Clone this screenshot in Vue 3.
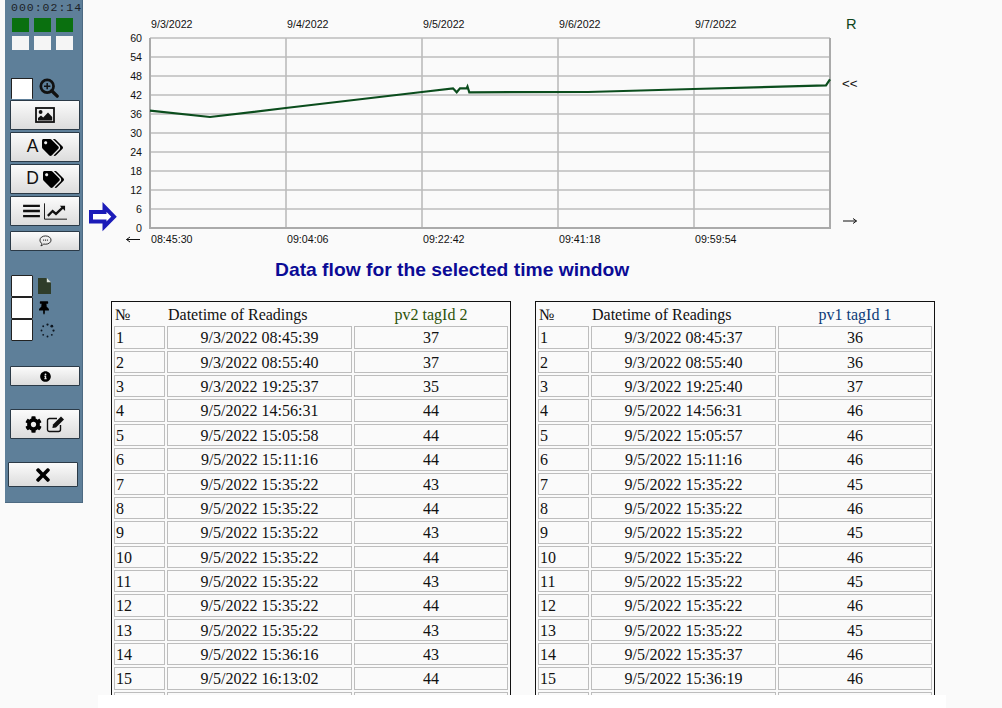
<template>
  <div class="page">
    <aside class="sidebar">
      <div class="timer">000:02:14</div>
      <div class="lights">
        <span class="light on"></span><span class="light on"></span><span class="light on"></span>
      </div>
      <div class="lights second">
        <span class="light"></span><span class="light"></span><span class="light"></span>
      </div>

      <div class="check-row zoom-row">
        <span class="check"></span>
        <svg class="ico-zoom" viewBox="0 0 22 22">
          <circle cx="9" cy="9" r="7" fill="none" stroke="#111" stroke-width="3" />
          <path d="M14 14l6 6" stroke="#111" stroke-width="3.6" stroke-linecap="round" />
          <path d="M9 5.5v7M5.5 9h7" stroke="#111" stroke-width="1.6" />
        </svg>
      </div>

      <button class="btn big first">
        <svg class="ico-image" viewBox="0 0 20 16">
          <rect x="1" y="1" width="18" height="14" fill="none" stroke="#111" stroke-width="1.8" />
          <circle cx="5.6" cy="5" r="1.9" fill="#111" />
          <path d="M3 13.500v-2.500l3-2.600 2.200 2 4.800-5 4.200 4.600v3.500z" fill="#111" />
        </svg>
      </button>
      <button class="btn big">
        <span class="btn-letter">A</span>
        <svg class="ico-tags" viewBox="0 0 640 512"><path :d="tagsPath" /></svg>
      </button>
      <button class="btn big">
        <span class="btn-letter">D</span>
        <svg class="ico-tags" viewBox="0 0 640 512"><path :d="tagsPath" /></svg>
      </button>
      <button class="btn big">
        <svg class="ico-bars" viewBox="0 0 18 15">
          <path d="M0 2h18M0 7.500h18M0 13h18" stroke="#111" stroke-width="2.600" />
        </svg>
        <svg class="ico-trend" viewBox="0 0 24 17">
          <path d="M.5 0v16.500H24" fill="none" stroke="#111" stroke-width="1" />
          <path d="M4 13l5-5 3.500 3L20 4" fill="none" stroke="#111" stroke-width="2.400" />
          <path d="M16.500 2.500H22V8z" fill="#111" />
        </svg>
      </button>
      <button class="btn small chat">
        <svg class="ico-chat" viewBox="0 0 14 13">
          <path d="M7 1c3.300 0 6 1.900 6 4.500S10.300 10 7 10c-.7 0-1.300-.1-1.900-.2C4.300 10.800 3.200 11.500 2 11.800c.6-.7 1-1.500 1.100-2.500C1.800 8.500 1 7.100 1 5.500 1 2.900 3.700 1 7 1z" fill="none" stroke="#222" stroke-width="1" />
          <path d="M4.500 5.500h1M6.500 5.500h1M8.500 5.500h1" stroke="#222" stroke-width="1.200" />
        </svg>
      </button>

      <div class="check-row docs">
        <span class="check"></span>
        <svg class="ico-file" viewBox="0 0 13 16"><path d="M0 0h8.500L13 4.500V16H0z" fill="#2f3d2a" /><path d="M8.800 0v4.300H13z" fill="#dfe6dc" /></svg>
      </div>
      <div class="check-row">
        <span class="check"></span>
        <svg class="ico-pin" viewBox="0 0 384 512"><path :d="pinPath" /></svg>
      </div>
      <div class="check-row">
        <span class="check"></span>
        <svg class="ico-spin" viewBox="0 0 16 16">
          <circle v-for="(d, i) in spinDots" :key="i" :cx="d.x" :cy="d.y" :r="d.r" fill="#0d1620" />
        </svg>
      </div>

      <button class="btn small info">
        <svg class="ico-info" viewBox="0 0 512 512"><path :d="infoPath" /></svg>
      </button>
      <button class="btn settings">
        <svg class="ico-cog" viewBox="0 0 512 512"><path :d="cogPath" /></svg>
        <svg class="ico-edit" viewBox="0 0 20 18">
          <path d="M14.500 10v4.500a2 2 0 0 1-2 2h-9a2 2 0 0 1-2-2v-9a2 2 0 0 1 2-2H11" fill="none" stroke="#111" stroke-width="1.400" />
          <path d="M7 9.500L15 1.500l3 3L10 12.500l-3.600.6z" fill="#111" />
        </svg>
      </button>
      <button class="btn close">
        <svg class="ico-close" viewBox="0 0 352 512"><path :d="timesPath" /></svg>
      </button>
    </aside>

    <main class="main">
      <svg class="chart" width="790" height="256" viewBox="83 0 790 256">
        <!-- pointer arrow -->
        <path d="M91 212h13.500v-5l9.500 9.700-9.500 9.700v-5H91z" fill="#fff" stroke="#1b1bb8" stroke-width="4" />

        <line v-for="y in hLines" :key="'h' + y" x1="150" x2="830" :y1="y" :y2="y" class="grid" />
        <line v-for="x in vLines" :key="'v' + x" :x1="x" :x2="x" y1="38" y2="228" class="grid" />
        <path d="M150 38v190h680V38" fill="none" stroke="#aaa" stroke-width="2" />

        <polyline class="series" :points="seriesPoints" />

        <text v-for="t in yTicks" :key="'y' + t.label" x="142" :y="t.y + 4" class="tick" text-anchor="end">{{ t.label }}</text>
        <text v-for="d in xTicks" :key="d.date" :x="d.x" y="28" class="tick">{{ d.date }}</text>
        <text v-for="d in xTicks" :key="d.time" :x="d.x" y="243" class="tick">{{ d.time }}</text>

        <text x="846" y="29" class="right-r">R</text>
        <text x="842" y="88" class="right-mark">&lt;&lt;</text>
        <path d="M843 221h13.500M853 218.500l3.500 2.500-3.500 2.500" fill="none" stroke="#111" stroke-width="1" />
        <path d="M140 239.500h-13.500M130 237l-3.500 2.500 3.500 2.500" fill="none" stroke="#111" stroke-width="1" />
      </svg>

      <h1 class="title">Data flow for the selected time window</h1>

      <div class="tables">
        <table v-for="t in tables" :key="t.tag" class="readings">
          <thead>
            <tr>
              <th class="col-n">№</th>
              <th class="col-d">Datetime of Readings</th>
              <th class="col-v" :style="{ color: t.color }">{{ t.tag }}</th>
            </tr>
          </thead>
          <tbody>
            <tr v-for="(r, i) in t.rows" :key="i">
              <td class="num">{{ i + 1 }}</td>
              <td>{{ r[0] }}</td>
              <td>{{ r[1] }}</td>
            </tr>
            <!-- next row is cut off by the strip, only its top edge shows -->
            <tr class="cut"><td></td><td></td><td></td></tr>
          </tbody>
        </table>
      </div>
      <div class="strip"></div>
    </main>
  </div>
</template>

<script setup>
const tagsPath = 'M497.941 225.941L286.059 14.059A48 48 0 0 0 252.118 0H48C21.49 0 0 21.49 0 48v204.118a48 48 0 0 0 14.059 33.941l211.882 211.882c18.744 18.745 49.136 18.746 67.882 0l204.118-204.118c18.745-18.745 18.745-49.137 0-67.882zM112 160c-26.51 0-48-21.49-48-48s21.49-48 48-48 48 21.49 48 48-21.49 48-48 48zm513.941 133.823L421.823 497.941c-18.745 18.745-49.137 18.745-67.882 0l-.36-.36L527.64 323.522c16.999-16.999 26.36-39.6 26.36-63.64s-9.362-46.641-26.36-63.64L331.397 0h48.721a48 48 0 0 1 33.941 14.059l211.882 211.882c18.745 18.745 18.745 49.137 0 67.882z'
const pinPath = 'M298.028 214.267L285.793 96H328c13.255 0 24-10.745 24-24V24c0-13.255-10.745-24-24-24H56C42.745 0 32 10.745 32 24v48c0 13.255 10.745 24 24 24h42.207L85.972 214.267C37.465 236.82 0 277.261 0 328c0 13.255 10.745 24 24 24h136v104.007c0 1.242.289 2.467.845 3.578l24 48c2.941 5.882 11.364 5.893 14.311 0l24-48a8.008 8.008 0 0 0 .845-3.578V352h136c13.255 0 24-10.745 24-24-.001-51.183-37.983-91.42-85.973-113.733z'
const infoPath = 'M256 8C119.043 8 8 119.083 8 256c0 136.997 111.043 248 248 248s248-111.003 248-248C504 119.083 392.957 8 256 8zm0 110c23.196 0 42 18.804 42 42s-18.804 42-42 42-42-18.804-42-42 18.804-42 42-42zm56 254c0 6.627-5.373 12-12 12h-88c-6.627 0-12-5.373-12-12v-24c0-6.627 5.373-12 12-12h12v-64h-12c-6.627 0-12-5.373-12-12v-24c0-6.627 5.373-12 12-12h64c6.627 0 12 5.373 12 12v100h12c6.627 0 12 5.373 12 12v24z'
const cogPath = 'M487.4 315.7l-42.6-24.6c4.3-23.2 4.3-47 0-70.2l42.6-24.6c4.9-2.8 7.1-8.6 5.5-14-11.1-35.6-30-67.8-54.7-94.6-3.8-4.1-10-5.1-14.8-2.3L380.8 110c-17.9-15.4-38.5-27.3-60.8-35.1V25.8c0-5.6-3.9-10.5-9.4-11.7-36.7-8.2-74.3-7.8-109.2 0-5.5 1.2-9.4 6.1-9.4 11.7V75c-22.2 7.9-42.8 19.8-60.8 35.1L88.7 85.5c-4.9-2.8-11-1.9-14.8 2.3-24.7 26.7-43.6 58.9-54.7 94.6-1.7 5.4.6 11.2 5.5 14L67.3 221c-4.3 23.2-4.3 47 0 70.2l-42.6 24.6c-4.9 2.8-7.1 8.6-5.5 14 11.1 35.6 30 67.8 54.7 94.6 3.8 4.1 10 5.1 14.8 2.3l42.6-24.6c17.9 15.4 38.5 27.3 60.8 35.1v49.2c0 5.6 3.9 10.5 9.4 11.7 36.7 8.2 74.3 7.8 109.2 0 5.5-1.2 9.4-6.1 9.4-11.7v-49.2c22.2-7.9 42.8-19.8 60.8-35.1l42.6 24.6c4.9 2.8 11 1.9 14.8-2.3 24.7-26.7 43.6-58.9 54.7-94.6 1.5-5.500-.7-11.300-5.600-14.100zM256 336c-44.100 0-80-35.900-80-80s35.900-80 80-80 80 35.900 80 80-35.900 80-80 80z'
const timesPath = 'M242.72 256l100.07-100.07c12.28-12.28 12.28-32.19 0-44.48l-22.24-22.24c-12.28-12.28-32.19-12.28-44.48 0L176 189.28 75.93 89.21c-12.28-12.28-32.19-12.28-44.48 0L9.21 111.45c-12.28 12.28-12.28 32.19 0 44.48L109.28 256 9.21 356.07c-12.28 12.28-12.28 32.19 0 44.48l22.24 22.24c12.28 12.28 32.2 12.28 44.48 0L176 322.72l100.07 100.07c12.28 12.28 32.2 12.28 44.48 0l22.24-22.24c12.28-12.28 12.28-32.19 0-44.48L242.72 256z'

const spinDots = [
  { x: 8, y: 1.6, r: 1.2 }, { x: 12.6, y: 3.4, r: 1.5 }, { x: 14.400, y: 8, r: 1.2 },
  { x: 12.6, y: 12.6, r: 1 }, { x: 8, y: 14.400, r: 1 }, { x: 3.4, y: 12.6, r: 1 },
  { x: 1.6, y: 8, r: 1 }, { x: 3.4, y: 3.4, r: 1 },
]

const hLines = [38, 57, 76, 95, 114, 133, 152, 171, 190, 209]
const vLines = [286, 422, 558, 694]
const yTicks = [60, 54, 48, 42, 36, 30, 24, 18, 12, 6, 0].map((v, i) => ({ label: v, y: 38 + i * 19 }))
const xTicks = [
  { x: 151, date: '9/3/2022', time: '08:45:30' },
  { x: 287, date: '9/4/2022', time: '09:04:06' },
  { x: 423, date: '9/5/2022', time: '09:22:42' },
  { x: 559, date: '9/6/2022', time: '09:41:18' },
  { x: 695, date: '9/7/2022', time: '09:59:54' },
]
const seriesPoints = '150,110.7 210,117 285.7,108 422,92 453,88.3 456.7,92.3 460,88.3 466.7,88.3 467.5,86.5 469.3,92.3 588,92 693.7,89 826,85.3 830,79.3'

const tables = [
  {
    tag: 'pv2 tagId 2',
    color: '#2c5208',
    rows: [
      ['9/3/2022 08:45:39', 37], ['9/3/2022 08:55:40', 37], ['9/3/2022 19:25:37', 35],
      ['9/5/2022 14:56:31', 44], ['9/5/2022 15:05:58', 44], ['9/5/2022 15:11:16', 44],
      ['9/5/2022 15:35:22', 43], ['9/5/2022 15:35:22', 44], ['9/5/2022 15:35:22', 43],
      ['9/5/2022 15:35:22', 44], ['9/5/2022 15:35:22', 43], ['9/5/2022 15:35:22', 44],
      ['9/5/2022 15:35:22', 43], ['9/5/2022 15:36:16', 43], ['9/5/2022 16:13:02', 44],
    ],
  },
  {
    tag: 'pv1 tagId 1',
    color: '#0c3a78',
    rows: [
      ['9/3/2022 08:45:37', 36], ['9/3/2022 08:55:40', 36], ['9/3/2022 19:25:40', 37],
      ['9/5/2022 14:56:31', 46], ['9/5/2022 15:05:57', 46], ['9/5/2022 15:11:16', 46],
      ['9/5/2022 15:35:22', 45], ['9/5/2022 15:35:22', 46], ['9/5/2022 15:35:22', 45],
      ['9/5/2022 15:35:22', 46], ['9/5/2022 15:35:22', 45], ['9/5/2022 15:35:22', 46],
      ['9/5/2022 15:35:22', 45], ['9/5/2022 15:35:37', 46], ['9/5/2022 15:36:19', 46],
    ],
  },
]
</script>

<style scoped>
.page {
  display: flex;
  height: 708px;
  overflow: hidden;
  background: #fafafa;
}

.sidebar {
  flex: none;
  box-sizing: border-box;
  width: 78px;
  height: 503px;
  margin-left: 5px;
  display: flex;
  flex-direction: column;
  background: #5e7f99;
  border-right: 1px solid #4d6a82;
  border-bottom: 1px solid #4d6a82;
}
.timer {
  height: 16px;
  margin-left: 6px;
  width: 78px;
  font: 11.5px/15px "Liberation Mono", monospace;
  letter-spacing: 1px;
  color: #1d2226;
  white-space: nowrap;
}
.lights {
  display: flex;
  gap: 5px;
  margin: 2px 0 0 7px;
}
.lights.second {
  margin-top: 4px;
}
.light {
  width: 17px;
  height: 14px;
  background: #f5f5f5;
}
.light.on {
  background: #0a700f;
}

.check-row {
  display: flex;
  align-items: center;
  height: 22px;
  margin-left: 6px;
}
.zoom-row {
  margin-top: 28px;
  height: 20px;
}
.docs {
  margin-top: 24px;
}
.check {
  box-sizing: border-box;
  width: 22px;
  height: 22px;
  background: #fff;
  border: 1px solid #222;
  border-radius: 1px;
}
.zoom-row .check {
  height: 21px;
  border-bottom: 0;
}

.btn {
  display: flex;
  align-items: center;
  justify-content: center;
  box-sizing: border-box;
  width: 70px;
  margin: 2px 0 0 5px;
  padding: 0;
  background: linear-gradient(#fbfbfb, #dcdcdc);
  border: 1px solid #2b3a47;
  border-radius: 1px;
}
.big {
  height: 30px;
}
.small {
  height: 20px;
}
.chat {
  margin-top: 5px;
}
.info {
  margin-top: 25px;
}
.settings {
  height: 30px;
  margin-top: 23px;
}
.close {
  width: 70px;
  height: 25px;
  margin: 23px 0 0 3px;
}
.btn-letter {
  font: 17.5px/1 "Liberation Sans", sans-serif;
  color: #111;
  margin-right: 4px;
}

.ico-zoom { width: 20px; height: 20px; margin-left: 6px; }
.ico-image { width: 20px; height: 16px; }
.ico-tags { width: 21px; height: 17px; }
.ico-bars { width: 17px; height: 14px; margin-right: 4px; }
.ico-trend { width: 23px; height: 17px; }
.ico-chat { width: 13px; height: 12px; }
.ico-file { width: 13px; height: 16px; margin-left: 5px; }
.ico-pin { width: 10px; height: 14px; margin-left: 6px; }
.ico-spin { width: 15px; height: 15px; margin-left: 7px; }
.ico-info { width: 11px; height: 11px; }
.ico-cog { width: 17px; height: 17px; margin-right: 4px; }
.ico-edit { width: 20px; height: 18px; }
.ico-close { width: 14px; height: 20px; }

.main {
  flex: none;
  width: 863px;
}
.chart {
  display: block;
}
.grid {
  stroke: #bcbcbc;
  stroke-width: 1.6;
}
.series {
  fill: none;
  stroke: #0b4d1d;
  stroke-width: 2.2;
}
.tick {
  font: 10.67px "Liberation Sans", sans-serif;
  fill: #111;
}
.right-r {
  font: 14.67px "Liberation Sans", sans-serif;
  fill: #0e4420;
}
.right-mark {
  font: 13.33px "Liberation Sans", sans-serif;
  fill: #111;
}

.title {
  margin: 1px 0 19px 192px;
  height: 25px;
  font: bold 19.27px/25px "Liberation Sans", sans-serif;
  color: #0b0b96;
  white-space: nowrap;
}

.tables {
  display: flex;
  gap: 24px;
  height: 394px;
  overflow: hidden;
  padding-left: 28px;
}
.readings {
  flex: none;
  box-sizing: border-box;
  width: 400px;
  height: max-content;
  table-layout: fixed;
  border: 1px solid #111;
  border-spacing: 2px;
  font: 16px/18.36px "Liberation Serif", serif;
  color: #111;
}
.readings th {
  padding: 2px 1px 0;
  font-weight: normal;
}
.readings td {
  padding: 2px 1px 0;
  border: 1px solid #bdbdbd;
  text-align: center;
}
.readings .num {
  text-align: left;
}
.readings th.col-n {
  width: 51px;
  box-sizing: border-box;
  text-align: left;
}
.readings th.col-d {
  width: 183px;
  text-align: left;
}
.readings .cut td {
  height: 18px;
}
.strip {
  height: 13px;
  margin-left: 15px;
  width: 848px;
  background: #fff;
}
</style>
